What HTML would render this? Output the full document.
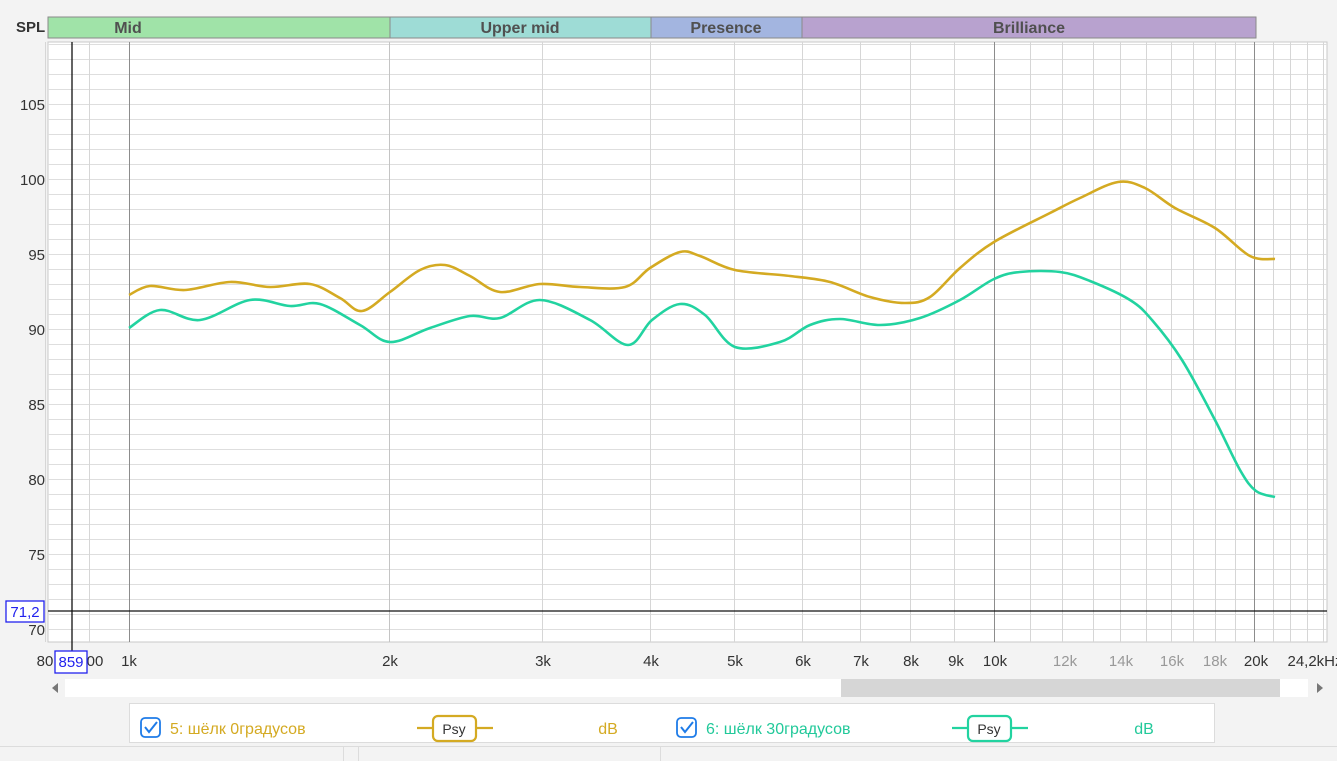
<!DOCTYPE html>
<html><head><meta charset="utf-8"><style>
html,body{margin:0;padding:0;background:#f3f3f3;width:1337px;height:761px;overflow:hidden;font-family:"Liberation Sans","DejaVu Sans",sans-serif}
svg{display:block}
</style></head><body>
<svg id="s" width="1337" height="761" xmlns="http://www.w3.org/2000/svg" font-family="Liberation Sans, DejaVu Sans, sans-serif">
<rect x="0" y="0" width="1337" height="761" fill="#f3f3f3"/>
<text x="16" y="32" font-size="15" font-weight="bold" fill="#333">SPL</text>
<rect x="48" y="17" width="342" height="21" fill="#a0e3a8" stroke="#8a8a8a"/>
<rect x="390" y="17" width="261" height="21" fill="#9edcd6" stroke="#8a8a8a"/>
<rect x="651" y="17" width="151" height="21" fill="#a3b5e0" stroke="#8a8a8a"/>
<rect x="802" y="17" width="454" height="21" fill="#b8a2cf" stroke="#8a8a8a"/>
<g font-size="16" font-weight="bold" fill="#505050" text-anchor="middle">
<text x="128" y="33">Mid</text><text x="520" y="33">Upper mid</text><text x="726" y="33">Presence</text><text x="1029" y="33">Brilliance</text>
</g>
<rect x="48" y="42" width="1279" height="600" fill="#fff" stroke="#c8c8c8"/>
<g id="grid"></g>
<g id="ylab" font-size="15" fill="#333" text-anchor="end"></g>
<g id="xlab" font-size="15" text-anchor="middle"></g>
<line x1="48" y1="611" x2="1327" y2="611" stroke="#111" stroke-width="1.3"/>
<line x1="72" y1="42" x2="72" y2="660" stroke="#111" stroke-width="1.3"/>
<rect x="6" y="601" width="38" height="21" fill="#fff" stroke="#2222ee" stroke-width="1.3"/>
<text x="25" y="617" font-size="15" fill="#2222ee" text-anchor="middle">71,2</text>
<path id="y1" fill="none" stroke="#d4aa22" stroke-width="2.6" stroke-linejoin="round"/>
<path id="g1" fill="none" stroke="#22d3a0" stroke-width="2.6" stroke-linejoin="round"/>
<rect x="55" y="651" width="32" height="22" fill="#fff" stroke="#2222ee" stroke-width="1.3"/>
<text x="71" y="667" font-size="15" fill="#2222ee" text-anchor="middle">859</text>
<rect x="65" y="679" width="1243" height="18" fill="#fff"/>
<rect x="841" y="679" width="439" height="18" fill="#d6d6d6"/>
<path d="M58 683 L52 688 L58 693 Z" fill="#777"/>
<path d="M1317 683 L1323 688 L1317 693 Z" fill="#777"/>
<rect x="129.5" y="703.5" width="1085" height="39" fill="#fff" stroke="#dcdcdc"/>
<rect x="141" y="718" width="19" height="19" rx="4" fill="#fff" stroke="#1e7be8" stroke-width="1.8"/>
<path d="M145 727 L149 732 L157 722" fill="none" stroke="#1e7be8" stroke-width="2"/>
<text x="170" y="734" font-size="16" fill="#d4aa22">5: шёлк 0градусов</text>
<line x1="417" y1="728" x2="493" y2="728" stroke="#d4aa22" stroke-width="2.2"/>
<rect x="433" y="716" width="43" height="25" rx="5" fill="#fff" stroke="#d4aa22" stroke-width="2.2"/>
<text x="454" y="734" font-size="14" fill="#333" text-anchor="middle">Psy</text>
<text x="608" y="734" font-size="16" fill="#d4aa22" text-anchor="middle">dB</text>
<rect x="677" y="718" width="19" height="19" rx="4" fill="#fff" stroke="#1e7be8" stroke-width="1.8"/>
<path d="M681 727 L685 732 L693 722" fill="none" stroke="#1e7be8" stroke-width="2"/>
<text x="706" y="734" font-size="16" fill="#22c99a">6: шёлк 30градусов</text>
<line x1="952" y1="728" x2="1028" y2="728" stroke="#22d3a0" stroke-width="2.2"/>
<rect x="968" y="716" width="43" height="25" rx="5" fill="#fff" stroke="#22d3a0" stroke-width="2.2"/>
<text x="989" y="734" font-size="14" fill="#333" text-anchor="middle">Psy</text>
<text x="1144" y="734" font-size="16" fill="#22c99a" text-anchor="middle">dB</text>
<line x1="0" y1="746.5" x2="1337" y2="746.5" stroke="#dcdcdc"/>
<line x1="343.5" y1="747" x2="343.5" y2="761" stroke="#dcdcdc"/>
<line x1="358.5" y1="747" x2="358.5" y2="761" stroke="#dcdcdc"/>
<line x1="660.5" y1="747" x2="660.5" y2="761" stroke="#dcdcdc"/>
<text x="365" y="772" font-size="15" fill="#333">Maximum 100 dB SPL, 1 small scroll</text>
<text x="675" y="772" font-size="15" fill="#333">Right click and drag to zoom a frequency</text>
</svg>
<script>
var NS="http://www.w3.org/2000/svg";
function el(p,t,a,txt){var e=document.createElementNS(NS,t);for(var k in a)e.setAttribute(k,a[k]);if(txt)e.textContent=txt;document.getElementById(p).appendChild(e);}
function X(f){return 129+865*Math.log10(f/1000);}
for(var d=70;d<=109;d++){var y=629-(d-70)*15;el("grid","line",{x1:48,x2:1327,y1:y+.5,y2:y+.5,stroke:"#dedede"});}
[70,75,80,85,90,95,100,105].forEach(function(d){el("ylab","text",{x:45,y:629-(d-70)*15+6},String(d));});
var fs=[800,900];for(var k=1;k<=24;k++)fs.push(k*1000);
fs.forEach(function(f){var x=Math.round(X(f))+.5;var major=(f==1000||f==10000||f==20000||f==2000);el("grid","line",{x1:x,x2:x,y1:42,y2:642,stroke:(f==1000||f==10000||f==20000)?"#8c8c8c":(major?"#c4c4c4":"#d6d6d6")});});
var labs=[[45,"80","#333"],[95,"00","#333"],[129,"1k","#333"],[390,"2k","#333"],[543,"3k","#333"],[651,"4k","#333"],[735,"5k","#333"],[803,"6k","#333"],[861,"7k","#333"],[911,"8k","#333"],[956,"9k","#333"],[995,"10k","#333"],[1065,"12k","#999"],[1121,"14k","#999"],[1172,"16k","#999"],[1215,"18k","#999"],[1256,"20k","#333"],[1315,"24,2kHz","#333"]];
labs.forEach(function(l){el("xlab","text",{x:l[0],y:666,fill:l[2]},l[1]);});
function smooth(p){var d="M"+p[0][0]+" "+p[0][1];for(var i=0;i<p.length-1;i++){var p0=p[i-1]||p[i],p1=p[i],p2=p[i+1],p3=p[i+2]||p2;
d+=" C"+(p1[0]+(p2[0]-p0[0])/6)+" "+(p1[1]+(p2[1]-p0[1])/6)+" "+(p2[0]-(p3[0]-p1[0])/6)+" "+(p2[1]-(p3[1]-p1[1])/6)+" "+p2[0]+" "+p2[1];}return d;}
var Y=[[129,295],[150,286],[185,290],[230,282],[270,287],[310,284],[340,298],[362,311],[390,292],[420,270],[445,265],[470,276],[500,292],[540,284],[580,287],[625,287],[650,268],[680,252],[700,256],[735,270],[790,276],[830,282],[870,297],[905,303],[930,297],[960,268],[994,242],[1050,213],[1080,198],[1118,182],[1145,188],[1175,208],[1215,228],[1250,256],[1275,259]];
var G=[[129,328],[160,310],[200,320],[250,300],[290,306],[320,304],[360,325],[390,342],[430,328],[470,316],[500,318],[540,300],[590,320],[628,345],[652,320],[680,304],[705,315],[735,347],[780,342],[810,325],[840,319],[880,325],[920,318],[960,300],[994,279],[1020,272],[1060,272],[1090,281],[1130,300],[1152,320],[1182,360],[1215,420],[1240,470],[1256,491],[1275,497]];
document.getElementById("y1").setAttribute("d",smooth(Y));
document.getElementById("g1").setAttribute("d",smooth(G));
</script>
</body></html>
